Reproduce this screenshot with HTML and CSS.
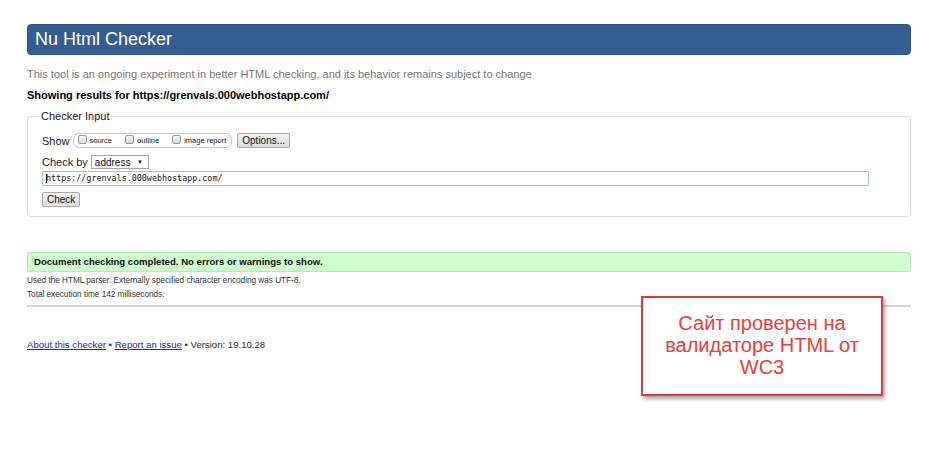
FILE: index.html
```html
<!DOCTYPE html>
<html lang="en">
<head>
<meta charset="utf-8">
<title>Nu Html Checker</title>
<link rel="stylesheet" href="styles.css">
</head>
<body>
<div class="page">
  <h1 class="header">Nu Html Checker</h1>
  <p class="intro">This tool is an ongoing experiment in better HTML checking, and its behavior remains subject to change</p>
  <p class="showing">Showing results for https://grenvals.000webhostapp.com/</p>

  <fieldset class="input-box">
    <legend>Checker Input</legend>
    <div class="row show-row">
      <span class="label">Show</span>
      <span class="opts">
        <label class="opt"><span class="cb"></span>source</label>
        <label class="opt"><span class="cb"></span>outline</label>
        <label class="opt"><span class="cb"></span>image report</label>
      </span>
      <span class="btn">Options...</span>
    </div>
    <div class="row by-row">
      <span class="label">Check by</span>
      <span class="select">address<span class="arrow">▼</span></span>
    </div>
    <div class="url"><span class="caret"></span>https://grenvals.000webhostapp.com/</div>
    <div class="row"><span class="btn">Check</span></div>
  </fieldset>

  <div class="success">Document checking completed. No errors or warnings to show.</div>
  <p class="details">Used the HTML parser. Externally specified character encoding was UTF-8.</p>
  <p class="details">Total execution time 142 milliseconds.</p>
  <hr class="rule">
  <p class="footer"><a href="#">About this checker</a> • <a href="#">Report an issue</a> • Version: 19.10.28</p>

  <div class="note">Сайт проверен на валидаторе HTML от WC3</div>
</div>
</body>
</html>
```
FILE: styles.css
```css
html, body {
  margin: 0;
  padding: 0;
  background: #fff;
}
.page {
  position: relative;
  box-sizing: border-box;
  min-height: 457px;
  padding: 24px 29px 0 27px;
  font-family: "Liberation Sans", Arial, sans-serif;
  color: #000;
}
.header {
  margin: 0;
  height: 31px;
  box-sizing: border-box;
  background: #365d93;
  border: 1px solid #2f5386;
  border-radius: 4px;
  color: #fff;
  font-size: 18px;
  font-weight: normal;
  line-height: 29px;
  padding-left: 7px;
}
.intro {
  margin: 12px 0 0;
  font-size: 11px;
  line-height: 14px;
  color: #777;
}
.showing {
  margin: 7px 0 0;
  font-size: 11px;
  line-height: 14px;
  font-weight: bold;
}
.input-box {
  margin: 7px 0 0;
  padding: 0 14px 9px;
  border: 1px solid #ddd;
  border-radius: 4px;
  min-width: 0;
}
.input-box legend {
  margin-left: -3px;
  padding: 0 2px;
  font-size: 11px;
  line-height: 14px;
  color: #222;
}
.row {
  display: flex;
  align-items: center;
}
.show-row {
  margin-top: 10px;
  height: 15px;
}
.label {
  font-size: 11px;
  color: #222;
  margin-right: 3px;
}
.opts {
  display: flex;
  align-items: center;
  height: 13px;
  border: 1px solid #c8c8c8;
  border-radius: 6px;
  padding: 0 5px 0 4px;
  gap: 13px;
}
.opt {
  display: flex;
  align-items: center;
  font-size: 7.5px;
  color: #222;
}
.cb {
  display: inline-block;
  width: 7px;
  height: 7px;
  margin-right: 3px;
  border: 1px solid #9a9a9a;
  border-radius: 2px;
  background: linear-gradient(#f4f4f4, #d8d8d8);
  position: relative;
  top: -1px;
}
.btn {
  display: inline-block;
  box-sizing: border-box;
  height: 15px;
  line-height: 13px;
  padding: 0 4px;
  font-size: 10px;
  color: #111;
  border: 1px solid #a9a9a9;
  border-radius: 2px;
  background: linear-gradient(#f0f0f0, #dcdcdc);
}
.show-row .btn {
  margin-left: 5px;
}
.by-row {
  margin-top: 7px;
  height: 14px;
}
.select {
  display: inline-flex;
  align-items: center;
  justify-content: space-between;
  box-sizing: border-box;
  width: 58px;
  height: 14px;
  padding: 0 3px;
  border: 1px solid #a9a9a9;
  font-size: 10px;
  color: #111;
  background: #fff;
}
.arrow {
  font-size: 6px;
  margin-right: 2px;
}
.url {
  margin-top: 2px;
  width: 827px;
  height: 15px;
  box-sizing: border-box;
  border: 1px solid #9ec4ec;
  border-radius: 1px;
  padding-left: 3px;
  font-family: "DejaVu Sans Mono", monospace;
  font-size: 8.4px;
  line-height: 13px;
  color: #222;
  position: relative;
}
.caret {
  position: absolute;
  left: 3px;
  top: 2px;
  width: 1px;
  height: 9px;
  background: #000;
}
.url + .row {
  margin-top: 6px;
}
.success {
  margin-top: 35px;
  height: 20px;
  box-sizing: border-box;
  background: #ccffcc;
  border: 1px solid #bfe3bf;
  border-radius: 2px;
  padding-left: 6px;
  font-size: 9.6px;
  font-weight: bold;
  line-height: 18px;
  color: #111;
}
.details {
  margin: 3px 0 0;
  font-size: 8.2px;
  line-height: 11px;
  color: #333;
}
.details + .details {
  margin-top: 3px;
}
.rule {
  margin: 5px 0 0;
  border: 0;
  height: 2px;
  background: #d4d4d4;
}
.footer {
  margin: 31px 0 0;
  font-size: 9.6px;
  line-height: 14px;
  color: #333;
}
.footer a {
  color: #2323cc;
  text-decoration: underline;
}
.note {
  position: absolute;
  left: 641px;
  top: 296px;
  width: 242px;
  height: 100px;
  box-sizing: border-box;
  border: 2px solid #e33b3b;
  background: #fff;
  box-shadow: 2px 3px 4px rgba(0, 0, 0, 0.35);
  padding: 14px 14px 0;
  text-align: center;
  font-size: 20px;
  line-height: 22px;
  color: #f03c3c;
}
```
